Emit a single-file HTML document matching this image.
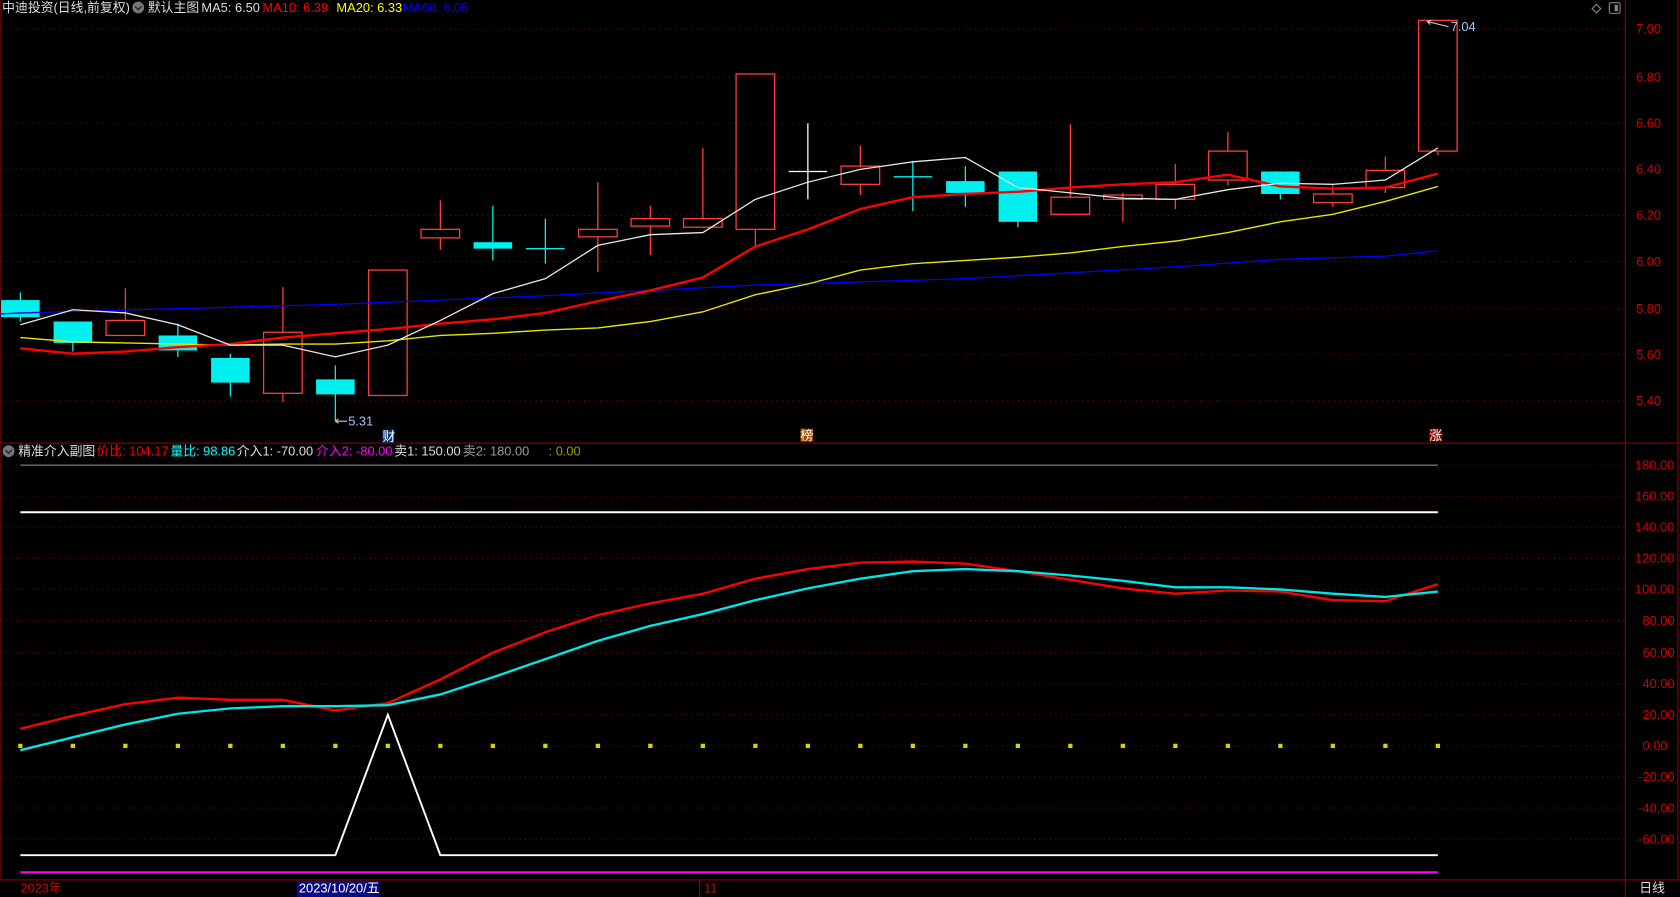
<!DOCTYPE html>
<html><head><meta charset="utf-8"><style>
html,body{margin:0;padding:0;background:#000;overflow:hidden}
svg{display:block}
text{font-family:"Liberation Sans","Noto Sans CJK SC",sans-serif;font-size:12px}
</style></head><body>
<svg width="1680" height="897" viewBox="0 0 1568 837" preserveAspectRatio="none" xmlns="http://www.w3.org/2000/svg">
<rect width="1568" height="837" fill="#000"/>
<g stroke="#800000" stroke-width="1.2" fill="none">
<line x1="1" y1="0" x2="1" y2="821"/>
<line x1="1517" y1="0" x2="1517" y2="837"/>
<line x1="1566" y1="0" x2="1566" y2="821"/>
<line x1="0" y1="413.5" x2="1568" y2="413.5"/>
<line x1="0" y1="821" x2="1568" y2="821"/>
<line x1="653" y1="821" x2="653" y2="837"/>
</g>
<g stroke="#8a0000" stroke-width="1" stroke-dasharray="1,4">
<line x1="0" y1="27" x2="1517" y2="27"/><line x1="0" y1="72" x2="1517" y2="72"/>
<line x1="0" y1="115" x2="1517" y2="115"/><line x1="0" y1="158" x2="1517" y2="158"/>
<line x1="0" y1="201" x2="1517" y2="201"/><line x1="0" y1="244" x2="1517" y2="244"/>
<line x1="0" y1="288" x2="1517" y2="288"/><line x1="0" y1="331" x2="1517" y2="331"/>
<line x1="0" y1="374" x2="1517" y2="374"/>
</g>
<g stroke="#8a0000" stroke-width="1" stroke-dasharray="1,4">
<line x1="0" y1="434" x2="1517" y2="434"/><line x1="0" y1="463" x2="1517" y2="463"/>
<line x1="0" y1="492" x2="1517" y2="492"/><line x1="0" y1="521" x2="1517" y2="521"/>
<line x1="0" y1="550" x2="1517" y2="550"/><line x1="0" y1="579" x2="1517" y2="579"/>
<line x1="0" y1="609" x2="1517" y2="609"/><line x1="0" y1="638" x2="1517" y2="638"/>
<line x1="0" y1="667" x2="1517" y2="667"/><line x1="0" y1="696" x2="1517" y2="696"/>
<line x1="0" y1="725" x2="1517" y2="725"/><line x1="0" y1="754" x2="1517" y2="754"/>
<line x1="0" y1="783" x2="1517" y2="783"/>
</g>
<g fill="#d00000" font-size="12">
<text x="1527" y="31">7.00</text><text x="1527" y="76">6.80</text><text x="1527" y="119">6.60</text>
<text x="1527" y="162">6.40</text><text x="1527" y="205">6.20</text><text x="1527" y="248">6.00</text>
<text x="1527" y="292">5.80</text><text x="1527" y="335">5.60</text><text x="1527" y="378">5.40</text>
</g>
<svg x="1518" y="414" width="47" height="406">
<g fill="#d00000" font-size="12">
<text x="8" y="24">180.00</text><text x="8" y="53">160.00</text><text x="8" y="82">140.00</text>
<text x="8" y="111">120.00</text><text x="8" y="140">100.00</text><text x="15" y="169">80.00</text>
<text x="15" y="199">60.00</text><text x="15" y="228">40.00</text><text x="15" y="257">20.00</text>
<text x="15" y="286">0.00</text><text x="11" y="315">-20.00</text><text x="11" y="344">-40.00</text>
<text x="11" y="373">-60.00</text>
</g></svg>
<g stroke="#ff3c3c" stroke-width="1.2" fill="none">
<line x1="117" y1="269" x2="117" y2="299"/><rect x="99" y="299" width="36" height="14"/>
<line x1="264" y1="268" x2="264" y2="310"/><line x1="264" y1="367" x2="264" y2="375"/><rect x="246" y="310" width="36" height="57"/>
<rect x="344" y="252" width="36" height="117"/>
<line x1="411" y1="187" x2="411" y2="214"/><line x1="411" y1="222" x2="411" y2="233"/><rect x="393" y="214" width="36" height="8"/>
<line x1="558" y1="170" x2="558" y2="214"/><line x1="558" y1="221" x2="558" y2="254"/><rect x="540" y="214" width="36" height="7"/>
<line x1="607" y1="192" x2="607" y2="204"/><line x1="607" y1="211" x2="607" y2="238"/><rect x="589" y="204" width="36" height="7"/>
<line x1="656" y1="138" x2="656" y2="204"/><line x1="656" y1="212" x2="656" y2="213"/><rect x="638" y="204" width="36" height="8"/>
<line x1="705" y1="214" x2="705" y2="230"/><rect x="687" y="69" width="36" height="145"/>
<line x1="803" y1="136" x2="803" y2="155"/><line x1="803" y1="172" x2="803" y2="182"/><rect x="785" y="155" width="36" height="17"/>
<line x1="999" y1="116" x2="999" y2="184"/><line x1="999" y1="200" x2="999" y2="201"/><rect x="981" y="184" width="36" height="16"/>
<line x1="1048" y1="180" x2="1048" y2="207"/><rect x="1030" y="182" width="36" height="4"/>
<line x1="1097" y1="153" x2="1097" y2="172"/><line x1="1097" y1="186" x2="1097" y2="195"/><rect x="1079" y="172" width="36" height="14"/>
<line x1="1146" y1="123" x2="1146" y2="141"/><line x1="1146" y1="168" x2="1146" y2="173"/><rect x="1128" y="141" width="36" height="27"/>
<line x1="1244" y1="173" x2="1244" y2="181"/><line x1="1244" y1="189" x2="1244" y2="193"/><rect x="1226" y="181" width="36" height="8"/>
<line x1="1293" y1="146" x2="1293" y2="159"/><line x1="1293" y1="175" x2="1293" y2="180"/><rect x="1275" y="159" width="36" height="16"/>
<line x1="1342" y1="141" x2="1342" y2="145"/><rect x="1324" y="19" width="36" height="122"/>
</g>
<g stroke="#00f0f0" stroke-width="1.2" fill="#00f0f0">
<line x1="19" y1="273" x2="19" y2="300"/><rect x="1" y="280" width="36" height="16" stroke="none"/>
<line x1="68" y1="300" x2="68" y2="328"/><rect x="50" y="300" width="36" height="20" stroke="none"/>
<line x1="166" y1="302" x2="166" y2="333"/><rect x="148" y="313" width="36" height="14" stroke="none"/>
<line x1="215" y1="330" x2="215" y2="370"/><rect x="197" y="334" width="36" height="23" stroke="none"/>
<line x1="313" y1="341" x2="313" y2="393"/><rect x="295" y="354" width="36" height="14" stroke="none"/>
<line x1="460" y1="192" x2="460" y2="243"/><rect x="442" y="226" width="36" height="6" stroke="none"/>
<line x1="509" y1="204" x2="509" y2="246"/><line x1="491" y1="232" x2="527" y2="232"/>
<line x1="852" y1="150" x2="852" y2="197"/><line x1="834" y1="165" x2="870" y2="165"/>
<line x1="901" y1="155" x2="901" y2="193"/><rect x="883" y="169" width="36" height="11" stroke="none"/>
<line x1="950" y1="160" x2="950" y2="212"/><rect x="932" y="160" width="36" height="47" stroke="none"/>
<line x1="1195" y1="160" x2="1195" y2="186"/><rect x="1177" y="160" width="36" height="21" stroke="none"/>
</g>
<g stroke="#fff" stroke-width="1.2"><line x1="754" y1="115" x2="754" y2="186"/><line x1="736" y1="160" x2="772" y2="160"/></g>
<g fill="none">
<polyline stroke="#0000ff" stroke-width="1.2" points="0,293 19,292 313,284 509,276 705,266 901,260 1097,249 1195,242 1293,239 1342,234"/>
<polyline stroke="#e6e600" stroke-width="1.3" points="19,315 68,319 117,320 166,321 215,322 264,321 313,321 362,318 411,313 460,311 509,308 558,306 607,300 656,291 705,275 754,265 803,252 852,246 901,243 950,240 999,236 1048,230 1097,225 1146,217 1195,207 1244,200 1293,188 1342,174"/>
<polyline stroke="#ff0000" stroke-width="2.2" points="19,325 68,330 117,328 166,324 215,321 264,315 313,311 362,307 411,302 460,298 509,292 558,281 607,271 656,259 705,230 754,214 803,195 852,184 901,181 950,179 999,175 1048,172 1097,170 1146,163 1195,174 1244,176 1293,175 1342,162"/>
<polyline stroke="#e8e8e8" stroke-width="1.2" points="19,303 68,289 117,292 166,303 215,322 264,322 313,333 362,322 411,299 460,274 509,260 558,229 607,219 656,217 705,186 754,170 803,158 852,151 901,147 950,175 999,180 1048,185 1097,186 1146,177 1195,171 1244,172 1293,168 1342,138"/>
</g>
<text x="325" y="397" fill="#9cc8ff">5.31</text><text x="1354" y="29" fill="#9cc8ff">7.04</text>
<g stroke="#ccc" stroke-width="1" fill="none"><path d="M313,393 H324 M313,393 l3,-2 M313,393 l3,2"/><path d="M1332,20 L1352,25 M1332,20 l4,-1 M1332,20 l3,3"/></g>
<rect x="357" y="401" width="11" height="12" fill="#0a3a78"/><text x="357" y="411.5" fill="#fff" font-size="11">财</text>
<rect x="747" y="400" width="12" height="12" fill="#9a4a00"/><text x="747" y="410.5" fill="#fff" font-size="11">榜</text>
<rect x="1334" y="400" width="12" height="12" fill="#8a0000"/><text x="1334" y="410.5" fill="#fff" font-size="11">涨</text>
<text x="2" y="11" fill="#ddd">中迪投资(日线,前复权)</text>
<circle cx="129" cy="7" r="5.5" fill="#777"/><path d="M126,6 l3,3 l3,-3" stroke="#222" stroke-width="1.3" fill="none"/>
<text x="138" y="11" fill="#ddd">默认主图</text>
<text x="188" y="11" fill="#ddd">MA5: 6.50</text>
<text x="245" y="11" fill="#ff0000">MA10: 6.39</text>
<text x="314" y="11" fill="#ffff00">MA20: 6.33</text>
<text x="376" y="11" fill="#0000ff">MA60: 6.05</text>
<path d="M1490,4 l4,4 l-4,4 l-4,-4z" stroke="#888" fill="none"/>
<rect x="1502" y="2.5" width="10" height="10" rx="1.5" stroke="#888" fill="none"/><rect x="1507" y="4.5" width="3" height="6" fill="#888"/>
<circle cx="8" cy="421" r="5.5" fill="#777"/><path d="M5,420 l3,3 l3,-3" stroke="#222" stroke-width="1.3" fill="none"/>
<text x="17" y="425" fill="#ddd">精准介入副图</text>
<text x="90" y="425" fill="#ff0000">价比: 104.17</text>
<text x="159" y="425" fill="#00ffff">量比: 98.86</text>
<text x="221" y="425" fill="#ddd">介入1: -70.00</text>
<text x="295" y="425" fill="#ff00ff">介入2: -80.00</text>
<text x="368" y="425" fill="#ddd">卖1: 150.00</text>
<text x="432" y="425" fill="#999">卖2: 180.00</text>
<text x="512" y="425" fill="#9a9a00">: 0.00</text>
<line x1="19" y1="434" x2="1342" y2="434" stroke="#999" stroke-width="1"/>
<line x1="19" y1="478" x2="1342" y2="478" stroke="#fff" stroke-width="1.8"/>
<g fill="none">
<polyline stroke="#ff0000" stroke-width="2.2" points="19,680 68,668 117,657 166,651 215,653 264,653 313,663 362,656 411,634 460,609 509,590 558,574 607,563 656,554 705,540 754,531 803,525 852,524 901,526 950,533 999,541 1048,549 1097,554 1146,551 1195,552 1244,560 1293,561 1342,545"/>
<polyline stroke="#00e5e5" stroke-width="2.2" points="19,700 68,688 117,676 166,666 215,661 264,659 313,659 362,658 411,648 460,632 509,615 558,598 607,584 656,573 705,560 754,549 803,540 852,533 901,531 950,533 999,537 1048,542 1097,548 1146,548 1195,550 1244,554 1293,557 1342,552"/>
<polyline stroke="#fff" stroke-width="1.8" points="19,798 313,798 362,667 411,798 1342,798"/>
</g>
<line x1="19" y1="814" x2="1342" y2="814" stroke="#ff00ff" stroke-width="2"/>
<g fill="#d4d400">
<rect x="17" y="694" width="4" height="4"/><rect x="66" y="694" width="4" height="4"/><rect x="115" y="694" width="4" height="4"/><rect x="164" y="694" width="4" height="4"/><rect x="213" y="694" width="4" height="4"/><rect x="262" y="694" width="4" height="4"/><rect x="311" y="694" width="4" height="4"/><rect x="360" y="694" width="4" height="4"/><rect x="409" y="694" width="4" height="4"/><rect x="458" y="694" width="4" height="4"/><rect x="507" y="694" width="4" height="4"/><rect x="556" y="694" width="4" height="4"/><rect x="605" y="694" width="4" height="4"/><rect x="654" y="694" width="4" height="4"/><rect x="703" y="694" width="4" height="4"/><rect x="752" y="694" width="4" height="4"/><rect x="801" y="694" width="4" height="4"/><rect x="850" y="694" width="4" height="4"/><rect x="899" y="694" width="4" height="4"/><rect x="948" y="694" width="4" height="4"/><rect x="997" y="694" width="4" height="4"/><rect x="1046" y="694" width="4" height="4"/><rect x="1095" y="694" width="4" height="4"/><rect x="1144" y="694" width="4" height="4"/><rect x="1193" y="694" width="4" height="4"/><rect x="1242" y="694" width="4" height="4"/><rect x="1291" y="694" width="4" height="4"/><rect x="1340" y="694" width="4" height="4"/>
</g>
<text x="19" y="833" fill="#d00000">2023年</text>
<rect x="277" y="822" width="77" height="15" fill="#0a0a80"/>
<text x="279" y="833" fill="#fff">2023/10/20/五</text>
<text x="657" y="833" fill="#d00000">11</text>
<text x="1530" y="833" fill="#ddd">日线</text>
</svg>
</body></html>
